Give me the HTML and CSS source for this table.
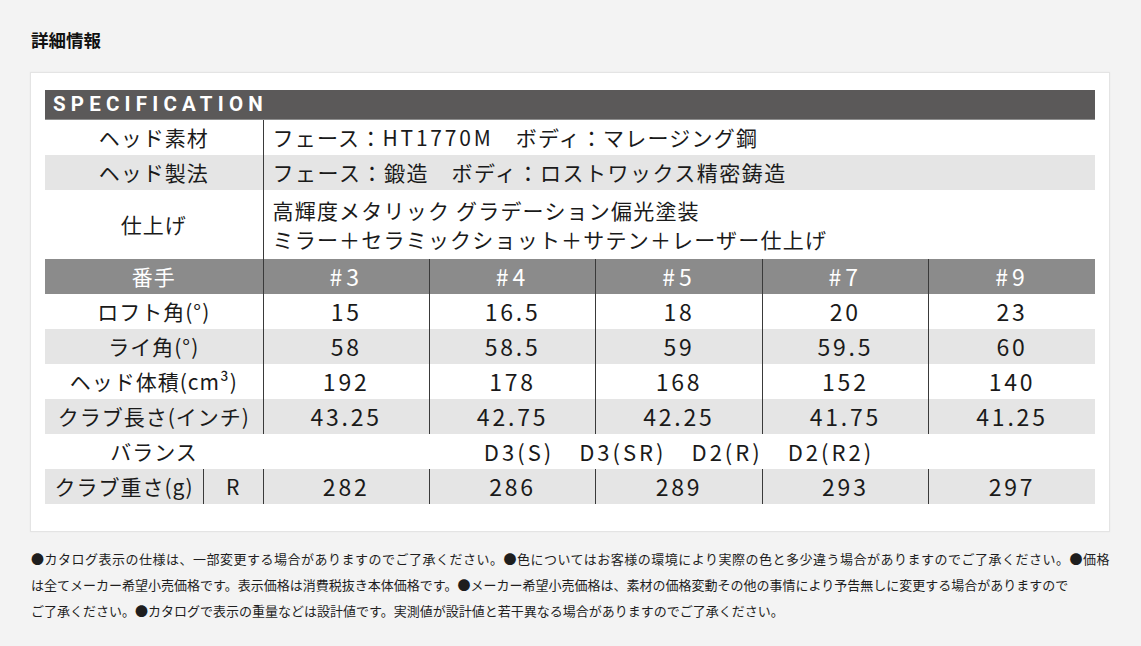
FILE: index.html
```html
<!DOCTYPE html>
<html lang="ja">
<head>
<meta charset="utf-8">
<title>詳細情報</title>
<link rel="stylesheet" href="styles.css">
</head>
<body>
<div class="page">
  <h2 class="title">詳細情報</h2>
  <div class="card">
    <table class="spec">
      <colgroup>
        <col class="c-label">
        <col class="c-data"><col class="c-data"><col class="c-data"><col class="c-data"><col class="c-data">
      </colgroup>
      <tr class="head"><td colspan="6" class="head-cell">SPECIFICATION</td></tr>
      <tr class="r"><td class="lbl">ヘッド素材</td><td colspan="5" class="txt">フェース：<span class="lat">HT1770M</span>　ボディ：マレージング鋼</td></tr>
      <tr class="r grey"><td class="lbl">ヘッド製法</td><td colspan="5" class="txt wide">フェース：鍛造　ボディ：ロストワックス精密鋳造</td></tr>
      <tr class="r tall"><td class="lbl">仕上げ</td><td colspan="5" class="txt two">高輝度メタリック グラデーション偏光塗装<br>ミラー＋セラミックショット＋サテン＋レーザー仕上げ</td></tr>
      <tr class="r num-head"><td class="lbl">番手</td><td class="num">#3</td><td class="num">#4</td><td class="num">#5</td><td class="num">#7</td><td class="num">#9</td></tr>
      <tr class="r"><td class="lbl">ロフト角(°)</td><td class="num">15</td><td class="num">16.5</td><td class="num">18</td><td class="num">20</td><td class="num">23</td></tr>
      <tr class="r grey"><td class="lbl">ライ角(°)</td><td class="num">58</td><td class="num">58.5</td><td class="num">59</td><td class="num">59.5</td><td class="num">60</td></tr>
      <tr class="r"><td class="lbl">ヘッド体積(cm³)</td><td class="num">192</td><td class="num">178</td><td class="num">168</td><td class="num">152</td><td class="num">140</td></tr>
      <tr class="r grey"><td class="lbl">クラブ長さ(インチ)</td><td class="num">43.25</td><td class="num">42.75</td><td class="num">42.25</td><td class="num">41.75</td><td class="num">41.25</td></tr>
      <tr class="r"><td class="lbl">バランス</td><td colspan="5" class="balance"><span>D3(S)</span><span>D3(SR)</span><span>D2(R)</span><span>D2(R2)</span></td></tr>
      <tr class="r grey"><td class="lbl split"><div class="split-in"><span class="split-a">クラブ重さ(g)</span><span class="split-b">R</span></div></td><td class="num">282</td><td class="num">286</td><td class="num">289</td><td class="num">293</td><td class="num">297</td></tr>
    </table>
  </div>
  <p class="notes"><span class="l1">●カタログ表示の仕様は、一部変更する場合がありますのでご了承ください。●色についてはお客様の環境により実際の色と多少違う場合がありますのでご了承ください。●価格</span><br>は全てメーカー希望小売価格です。表示価格は消費税抜き本体価格です。●メーカー希望小売価格は、素材の価格変動その他の事情により予告無しに変更する場合がありますので<br>ご了承ください。●カタログで表示の重量などは設計値です。実測値が設計値と若干異なる場合がありますのでご了承ください。</p>
</div>
</body>
</html>
```

FILE: styles.css
```css
html, body {
  margin: 0;
  padding: 0;
  background: #f3f3f3;
}

body {
  font-family: "Noto Sans CJK JP", "Noto Sans", sans-serif;
  color: #1a1a1a;
}

.page {
  padding: 28px 0 0 30px;
  width: 1081px;
}

.title {
  margin: 0 0 20px 1px;
  font-size: 17.5px;
  line-height: 24px;
  font-weight: 700;
  color: #111;
}

.card {
  background: #fff;
  border: 1px solid #e4e4e4;
  box-shadow: 0 0 2px rgba(0, 0, 0, 0.04);
  padding: 17px 14px 27px 14px;
  width: 1050px;
}

.spec {
  width: 1050px;
  table-layout: fixed;
  border-collapse: collapse;
  border-spacing: 0;
  font-size: 21px;
  color: #1a1a1a;
}

.c-label { width: 218px; }
.c-data { width: 166.4px; }

.spec td {
  padding: 0;
  text-align: center;
  vertical-align: middle;
  white-space: nowrap;
}

.head-cell {
  background: #5b5959;
  border-bottom: 1px solid #8e8e8e;
  height: 29px;
  text-align: left !important;
  padding-left: 8px !important;
  color: #fff;
  font-family: Roboto, "Noto Sans", sans-serif;
  font-weight: 700;
  font-size: 20.5px;
  letter-spacing: 5.2px;
  line-height: 29px;
}

.r td { height: 35px; line-height: 35px; }
.r.tall td { height: 69px; }
.grey td { background: #e5e5e5; }

.lbl { font-size: 21px; letter-spacing: 1px; }

.txt {
  text-align: left !important;
  padding-left: 9px !important;
  border-left: 1px solid #3a3a3a;
  letter-spacing: 1.2px;
}

.txt.wide { letter-spacing: 1.5px; }

.lat { letter-spacing: 2.8px; }

.txt.two { line-height: 29px !important; }

.num {
  border-left: 1px solid #3a3a3a;
  font-size: 23px;
  letter-spacing: 2.8px;
}

.num-head td {
  background: #8b8b8b;
  color: #fff;
}

.num-head .num { letter-spacing: 4px; }

.balance {
  font-size: 22px;
  letter-spacing: 3px;
}
.balance span { margin: 0 12.5px; }

.split-in {
  display: flex;
  align-items: stretch;
  height: 35px;
}
.split-a {
  width: 158px;
  text-align: center;
  border-right: 1px solid #3a3a3a;
}
.split-b {
  flex: 1;
  text-align: center;
}

.notes {
  margin: 14px 0 0 1px;
  font-size: 13px;
  line-height: 26px;
  color: #1e1e1e;
  width: 1090px;
  white-space: nowrap;
}

.notes .l1 { letter-spacing: 0.5px; }
```
